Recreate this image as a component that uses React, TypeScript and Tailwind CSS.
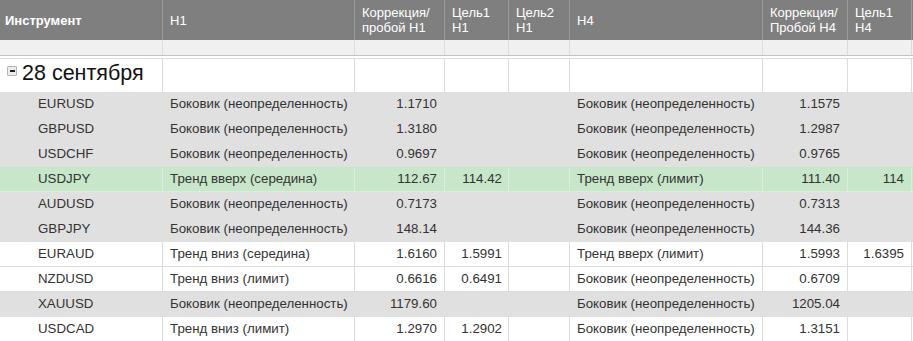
import React from "react";

type Row = {
  sym: string;
  h1: string;
  corr1: string;
  t1: string;
  t2: string;
  h4: string;
  corr4: string;
  t4: string;
  tone: "gray" | "green" | "white";
};

const ROWS: Row[] = [
  { sym: "EURUSD", h1: "Боковик (неопределенность)", corr1: "1.1710", t1: "", t2: "", h4: "Боковик (неопределенность)", corr4: "1.1575", t4: "", tone: "gray" },
  { sym: "GBPUSD", h1: "Боковик (неопределенность)", corr1: "1.3180", t1: "", t2: "", h4: "Боковик (неопределенность)", corr4: "1.2987", t4: "", tone: "gray" },
  { sym: "USDCHF", h1: "Боковик (неопределенность)", corr1: "0.9697", t1: "", t2: "", h4: "Боковик (неопределенность)", corr4: "0.9765", t4: "", tone: "gray" },
  { sym: "USDJPY", h1: "Тренд вверх (середина)", corr1: "112.67", t1: "114.42", t2: "", h4: "Тренд вверх (лимит)", corr4: "111.40", t4: "114", tone: "green" },
  { sym: "AUDUSD", h1: "Боковик (неопределенность)", corr1: "0.7173", t1: "", t2: "", h4: "Боковик (неопределенность)", corr4: "0.7313", t4: "", tone: "gray" },
  { sym: "GBPJPY", h1: "Боковик (неопределенность)", corr1: "148.14", t1: "", t2: "", h4: "Боковик (неопределенность)", corr4: "144.36", t4: "", tone: "gray" },
  { sym: "EURAUD", h1: "Тренд вниз (середина)", corr1: "1.6160", t1: "1.5991", t2: "", h4: "Тренд вверх (лимит)", corr4: "1.5993", t4: "1.6395", tone: "white" },
  { sym: "NZDUSD", h1: "Тренд вниз (лимит)", corr1: "0.6616", t1: "0.6491", t2: "", h4: "Боковик (неопределенность)", corr4: "0.6709", t4: "", tone: "white" },
  { sym: "XAUUSD", h1: "Боковик (неопределенность)", corr1: "1179.60", t1: "", t2: "", h4: "Боковик (неопределенность)", corr4: "1205.04", t4: "", tone: "gray" },
  { sym: "USDCAD", h1: "Тренд вниз (лимит)", corr1: "1.2970", t1: "1.2902", t2: "", h4: "Боковик (неопределенность)", corr4: "1.3151", t4: "", tone: "white" },
];

// column widths include the 1px right border
const GRID = "grid grid-cols-[163px_192px_90px_64px_61px_193px_85px_64px_1fr]";

const TONE: Record<Row["tone"], string> = {
  gray:  "bg-[#e0e0e0] border-[#e0e0e0]",
  green: "bg-[#c8e6c9] border-[#dbeedb]",
  white: "bg-white border-[#dcdcdc]",
};

function HeadCell({ children, bold }: { children?: React.ReactNode; bold?: boolean }) {
  return (
    <div
      className={`flex items-center px-[7px] border-r border-[#9a9a9a] leading-[15px] ${bold ? "font-bold pl-[5px]" : ""}`}
    >
      <span>{children}</span>
    </div>
  );
}

function DataRow({ row }: { row: Row }) {
  const tone = TONE[row.tone];
  const cell = `flex items-center border-r border-b ${tone}`;
  return (
    <div className={`${GRID} h-[25px]`}>
      <div className={`${cell} pl-[38px]`}>{row.sym}</div>
      <div className={`${cell} pl-[7px]`}>{row.h1}</div>
      <div className={`${cell} justify-end pr-[7px]`}>{row.corr1}</div>
      <div className={`${cell} justify-end pr-[6px]`}>{row.t1}</div>
      <div className={`${cell} justify-end pr-[6px]`}>{row.t2}</div>
      <div className={`${cell} pl-[7px]`}>{row.h4}</div>
      <div className={`${cell} justify-end pr-[7px]`}>{row.corr4}</div>
      <div className={`${cell} justify-end pr-[7px]`}>{row.t4}</div>
      <div className={`${cell} border-r-0`} />
    </div>
  );
}

export default function App() {
  const blanks = Array.from({ length: 9 });
  return (
    <div className="w-[913px] h-[341px] overflow-hidden bg-white text-[13.3px] text-[#333] font-['Liberation_Sans',Arial,sans-serif]">
      {/* header */}
      <div className={`${GRID} h-[40px] bg-[#7f7f7f] text-white text-[13px]`}>
        <HeadCell bold>Инструмент</HeadCell>
        <HeadCell>H1</HeadCell>
        <HeadCell>Коррекция/<br />пробой H1</HeadCell>
        <HeadCell>Цель1<br />H1</HeadCell>
        <HeadCell>Цель2<br />H1</HeadCell>
        <HeadCell>H4</HeadCell>
        <HeadCell>Коррекция/<br />Пробой H4</HeadCell>
        <HeadCell>Цель1<br />H4</HeadCell>
        <div />
      </div>

      {/* filter strip */}
      <div className={`${GRID} h-[16px] bg-[#f0f0f0] border-b border-[#c4c4c4]`}>
        {blanks.map((_, i) => (
          <div key={i} className={i < 8 ? "border-r border-[#dcdcdc]" : ""} />
        ))}
      </div>
      <div className="h-[2px] bg-white border-b border-[#dcdcdc] box-content" />

      {/* group row */}
      <div className={`${GRID} h-[33px]`}>
        <div className="flex items-center gap-[5px] pl-[7px] border-r border-[#dcdcdc]">
          <span className="w-[10px] h-[10px] mb-[9px] rounded-[1px] border border-[#b5b5b5] bg-[#ececec] flex items-center justify-center">
            <span className="w-[5px] h-[2px] bg-[#222]" />
          </span>
          <span className="text-[21.5px] leading-none text-[#111] -mt-[4px]">28 сентября</span>
        </div>
        {blanks.slice(1).map((_, i) => (
          <div key={i} className={i < 7 ? "border-r border-[#dcdcdc]" : ""} />
        ))}
      </div>

      {ROWS.map((r) => (
        <DataRow key={r.sym} row={r} />
      ))}
    </div>
  );
}
